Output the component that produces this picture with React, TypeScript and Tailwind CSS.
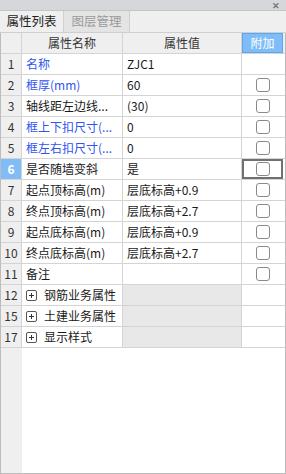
import React from "react";

type Row = {
  n: string;
  name: string;
  blue?: boolean;
  value?: string;
  check?: boolean;
  group?: boolean;
  selected?: boolean;
};

const rows: Row[] = [
  { n: "1", name: "名称", blue: true, value: "ZJC1" },
  { n: "2", name: "框厚(mm)", blue: true, value: "60", check: true },
  { n: "3", name: "轴线距左边线...", value: "(30)", check: true },
  { n: "4", name: "框上下扣尺寸(...", blue: true, value: "0", check: true },
  { n: "5", name: "框左右扣尺寸(...", blue: true, value: "0", check: true },
  { n: "6", name: "是否随墙变斜", value: "是", check: true, selected: true },
  { n: "7", name: "起点顶标高(m)", value: "层底标高+0.9", check: true },
  { n: "8", name: "终点顶标高(m)", value: "层底标高+2.7", check: true },
  { n: "9", name: "起点底标高(m)", value: "层底标高+0.9", check: true },
  { n: "10", name: "终点底标高(m)", value: "层底标高+2.7", check: true },
  { n: "11", name: "备注", value: "", check: true },
  { n: "12", name: "钢筋业务属性", group: true },
  { n: "15", name: "土建业务属性", group: true },
  { n: "17", name: "显示样式", group: true },
];

const font = {
  fontFamily: '"Noto Sans CJK SC", "Liberation Sans", sans-serif',
};

function Check() {
  return (
    <div className="w-[14px] h-[14px] rounded-[3px] border border-[#8a8a8a] bg-white" />
  );
}

function Plus() {
  return (
    <div className="w-[11px] h-[11px] rounded-[2px] border border-[#555] flex items-center justify-center relative">
      <div className="absolute w-[5px] h-[1px] bg-[#333]" />
      <div className="absolute w-[1px] h-[5px] bg-[#333]" />
    </div>
  );
}

export default function App() {
  return (
    <div
      className="w-[286px] h-[474px] flex flex-col bg-[#efefef] text-[12px] text-[#1a1a1a] overflow-hidden"
      style={font}
    >
      {/* title bar */}
      <div className="h-[11px] bg-[#d6d7db] flex items-center justify-end pr-[6px] border-b border-[#c4c5c9]">
        <span className="text-[9px] leading-none text-[#777] font-bold">✕</span>
      </div>
      {/* tabs */}
      <div className="h-[22px] flex items-stretch bg-[#efefef] border-b border-[#cfcfcf]">
        <div className="w-[64px] flex items-center justify-center text-[12.5px] text-[#222] bg-[#efefef] border-r border-[#d0d0d0]">
          属性列表
        </div>
        <div className="w-[66px] flex items-center justify-center text-[12.5px] text-[#9a9a9a] bg-[#e4e4e4] border-r border-[#cfcfcf]">
          图层管理
        </div>
      </div>
      {/* table */}
      <div className="flex-1 flex flex-col border-l border-r border-b border-[#bcbcbc] bg-white">
        {/* header */}
        <div className="h-[21px] flex bg-[#efefef] border-b border-[#d4d4d4]">
          <div className="w-[21px] border-r border-[#d4d4d4]" />
          <div className="w-[101px] border-r border-[#d4d4d4] flex items-center justify-center text-[#333]">
            属性名称
          </div>
          <div className="w-[119px] border-r border-[#d4d4d4] flex items-center justify-center text-[#333]">
            属性值
          </div>
          <div className="w-[41px] bg-[#80bdf8] border border-[#5aa6ef] flex items-center justify-center text-white">
            附加
          </div>
        </div>
        {rows.map((r) => (
          <div key={r.n} className="h-[21px] flex border-b border-[#d4d4d4]">
            <div
              className={
                r.selected
                  ? "w-[21px] border-r border-[#d4d4d4] bg-[#80bdf8] text-white font-bold flex items-center justify-center"
                  : "w-[21px] border-r border-[#d4d4d4] bg-[#efefef] text-[#333] flex items-center justify-center"
              }
            >
              {r.n}
            </div>
            {r.group ? (
              <>
                <div className="w-[101px] border-r border-[#d4d4d4] flex items-center pl-[4px] gap-[7px] whitespace-nowrap">
                  <Plus />
                  <span>{r.name}</span>
                </div>
                <div className="w-[119px] border-r border-[#d4d4d4] bg-[#e8e8e8]" />
                <div className="w-[41px]" />
              </>
            ) : (
              <>
                <div
                  className={
                    "w-[101px] border-r border-[#d4d4d4] flex items-center pl-[4px] whitespace-nowrap overflow-hidden " +
                    (r.blue ? "text-[#2f55f0]" : "text-[#1a1a1a]")
                  }
                >
                  {r.name}
                </div>
                <div className="w-[119px] border-r border-[#d4d4d4] flex items-center pl-[4px] whitespace-nowrap">
                  {r.value}
                </div>
                <div
                  className={
                    "w-[41px] flex items-center justify-center " +
                    (r.selected ? "border-2 border-[#707070]" : "")
                  }
                >
                  {r.check ? <Check /> : null}
                </div>
              </>
            )}
          </div>
        ))}
        {/* filler */}
        <div className="flex-1 flex">
          <div className="w-[21px] bg-[#efefef]" />
          <div className="flex-1 bg-white" />
        </div>
      </div>
    </div>
  );
}
